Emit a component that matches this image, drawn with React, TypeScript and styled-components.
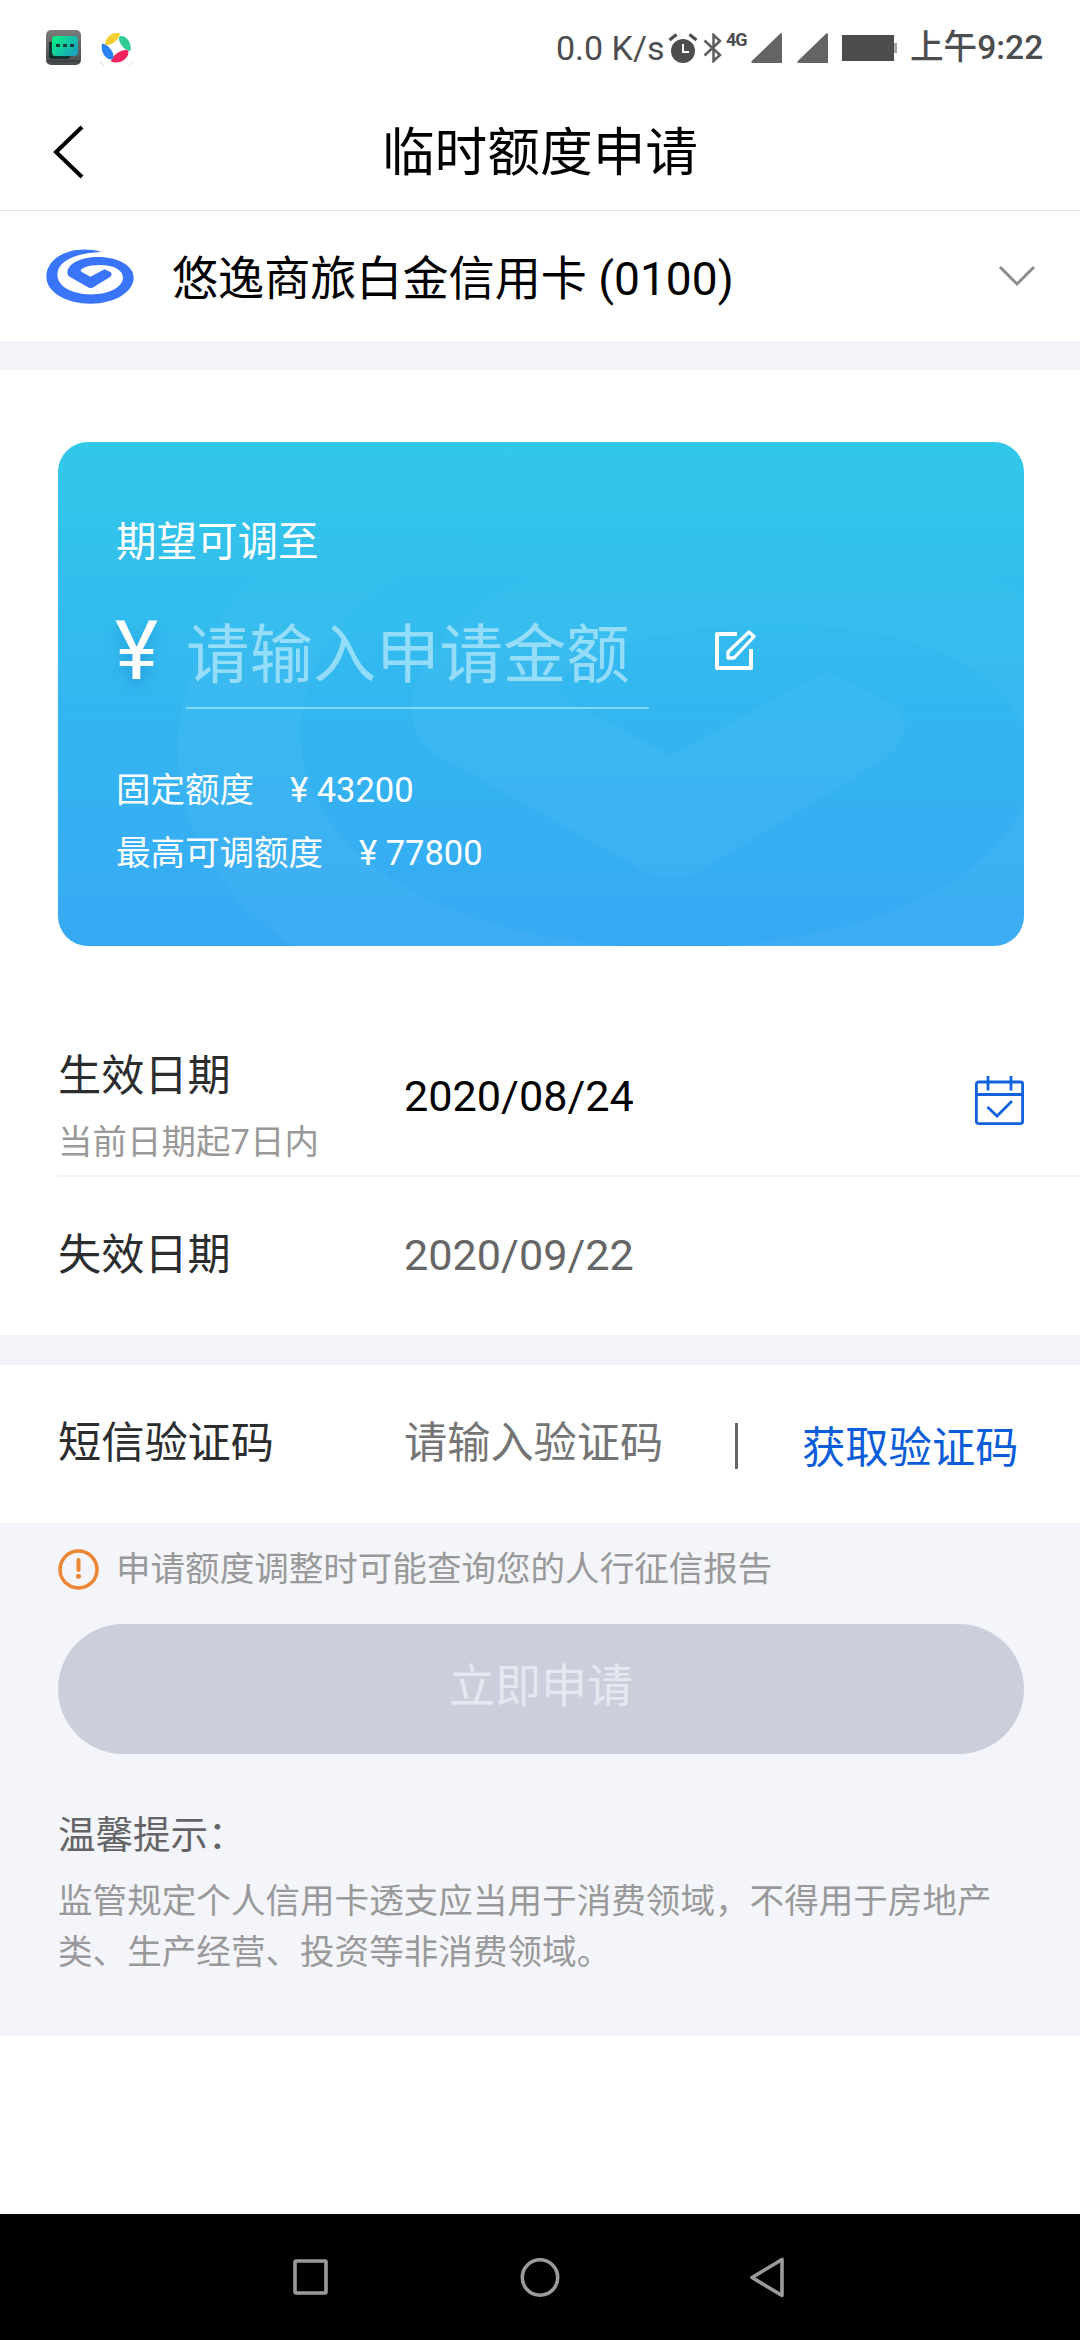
import React from "react";
import styled, { createGlobalStyle } from "styled-components";

const GlobalStyle = createGlobalStyle`
  * { box-sizing: border-box; }
  body {
    margin: 0;
    background: #fff;
    font-family: Roboto, "Noto Sans CJK SC", sans-serif;
  }
  svg { display: block; flex: none; }
`;

const Screen = styled.div`
  width: 1080px;
  height: 2340px;
  display: flex;
  flex-direction: column;
  background: #fff;
  overflow: hidden;
  white-space: nowrap;
`;

const StatusBar = styled.header`
  height: 96px;
  flex: none;
  display: flex;
  justify-content: space-between;
  padding: 0 37px 0 46px;
  color: #4c4d4f;
`;

const StatusApps = styled.div`
  display: flex;
  gap: 18px;
  padding-top: 30px;
`;

const StatusInfo = styled.div`
  display: flex;
  height: 96px;
  align-items: center;
`;

const Speed = styled.span`
  width: 113px;
  padding-left: 1px;
  font-size: 34px;
  line-height: 96px;
`;

const NetworkType = styled.span`
  width: 28px;
  padding-left: 3px;
  align-self: flex-start;
  margin-top: 26px;
  font-size: 18px;
  font-weight: 700;
  line-height: 28px;
  letter-spacing: -1.2px;
`;

const Clock = styled.span`
  width: 133px;
  margin-left: 13px;
  font-size: 33.6px;
  line-height: 96px;
  font-weight: 500;
`;

const TitleBar = styled.div`
  height: 115px;
  flex: none;
  display: grid;
  grid-template-columns: 120px 1fr 120px;
  border-bottom: 1px solid #e2e2e2;
`;

const BackButton = styled.div`
  padding: 28px 0 0 52px;
`;

const Title = styled.h1`
  margin: 0;
  text-align: center;
  font-size: 52.7px;
  font-weight: 400;
  line-height: 114px;
  color: #000;
`;

const CardSelect = styled.div`
  height: 130px;
  flex: none;
  display: flex;
  align-items: center;
  padding: 0 44px 0 46px;
`;

const CardName = styled.span`
  flex: 1;
  margin-left: 38px;
  font-size: 46.1px;
  line-height: 60px;
  padding-top: 6px;
  color: #000;
`;

const Band = styled.div`
  height: ${(p: { $h: number }) => p.$h}px;
  flex: none;
  background: #f2f4f9;
`;

const QuotaSection = styled.section`
  padding: 72px 56px 0 58px;
  height: 648px;
  flex: none;
`;

const QuotaCard = styled.div`
  position: relative;
  height: 504px;
  padding: 70px 58px 0;
  border-radius: 30px;
  overflow: hidden;
  color: #fff;
  background: linear-gradient(180deg, #32c8e8 0%, #33b7f0 50%, #37a9f4 100%);
`;

const Watermark = styled.svg`
  position: absolute;
  left: 120px;
  top: 0;
`;

const QuotaBody = styled.div`
  position: relative;
  display: flex;
  flex-direction: column;
`;

const QuotaLabel = styled.div`
  font-size: 40.5px;
  line-height: 60px;
`;

const AmountRow = styled.div`
  display: flex;
  height: 137px;
`;

const Currency = styled.span`
  width: 70px;
  margin-left: -1px;
  font-size: 82px;
  font-weight: 400;
  line-height: 100px;
  margin-top: 29px;
  text-shadow: 0 8px 12px rgba(20, 110, 190, 0.35);
`;

const AmountField = styled.div`
  width: 463px;
  height: 137px;
  margin-left: 1px;
  border-bottom: 2px solid #7edaf8;
  font-size: 63.4px;
  line-height: 167px;
  color: rgba(205, 242, 255, 0.62);
`;

const EditButton = styled.div`
  margin: 56px 0 0 63px;
`;

const QuotaLines = styled.div`
  margin-top: 50px;
`;

const QuotaLine = styled.div`
  display: flex;
  gap: 36px;
  font-size: 34.5px;
  line-height: 63px;
`;

const Row = styled.div`
  height: ${(p: { $h: number }) => p.$h}px;
  flex: none;
  display: flex;
  align-items: center;
  margin-left: 58px;
  padding-right: 56px;
  border-bottom: ${(p: { $h: number; $line?: boolean }) => (p.$line ? "2px solid #f5f5f6" : "none")};
`;

const LabelCell = styled.div`
  width: 346px;
  flex: none;
`;

const StackedLabel = styled(LabelCell)`
  align-self: flex-end;
`;

const Label = styled.div`
  font-size: 43.2px;
  line-height: 66px;
  color: #2c2d2f;
`;

const SubLabel = styled.div`
  font-size: 34.5px;
  line-height: 65px;
  color: #999;
`;

const Value = styled.div`
  flex: 1;
  font-size: 43.2px;
  line-height: 66px;
  color: ${(p: { $c: string }) => p.$c};
`;

const CalendarButton = styled.div`
  padding-top: 8px;
`;

const Separator = styled.div`
  width: 3px;
  height: 46px;
  margin-top: 3px;
  background: #666;
`;

const CodeButton = styled.div`
  width: 286px;
  padding: 9px 0 0 64px;
  font-size: 43.3px;
  line-height: 66px;
  color: #0a5cd8;
`;

const CodeValue = styled(Value)`
  flex: none;
  width: 331px;
`;

const Footer = styled.section`
  height: 513px;
  flex: none;
  padding: 26px 56px 0 58px;
  background: #f3f5fa;
`;

const Notice = styled.div`
  height: 41px;
  display: flex;
  align-items: center;
  gap: 17px;
  font-size: 34.55px;
  line-height: 41px;
  color: #999;
`;

const ApplyButton = styled.div`
  height: 130px;
  margin-top: 34px;
  border-radius: 65px;
  background: #cccfdb;
  text-align: center;
  font-size: 46px;
  line-height: 125px;
  color: #e5e8f1;
`;

const TipsTitle = styled.div`
  margin-top: 55px;
  font-size: 37.5px;
  line-height: 53px;
  color: #646466;
`;

const TipsText = styled.p`
  margin: 14px 0 0;
  font-size: 34.6px;
  line-height: 51px;
  color: #999;
`;

const NavBar = styled.nav`
  height: 126px;
  flex: none;
  margin-top: auto;
  display: flex;
  align-items: center;
  justify-content: center;
  gap: 187px;
  background: #000;
`;

const SWIRL =
  "M195 38 C160 28 125 29 95 38 C55 50 30 80 30 112 C30 160 90 194 162 194 C235 194 291 158 291 115 C291 80 245 53 185 53 C130 53 93 75 93 100 C93 108 97 112 105 116 L152 143 C159 148 166 148 173 143 L218 115 C226 109 228 103 220 98 L204 90 L162 113 L140 101 C132 97 130 94 136 89 C150 80 170 77 192 77 C232 77 259 93 259 115 C259 145 215 166 163 166 C105 166 63 141 63 107 C63 70 105 42 195 38 Z";

const MessageApp = () => (
  <svg width="35" height="35" viewBox="0 0 35 35">
    <defs>
      <linearGradient id="msgBg" x1="0" y1="0" x2="0" y2="1">
        <stop offset="0" stopColor="#7b7c7c" />
        <stop offset="1" stopColor="#474b4b" />
      </linearGradient>
      <linearGradient id="msgFg" x1="0" y1="0" x2="1" y2="0.6">
        <stop offset="0.2" stopColor="#0be58b" />
        <stop offset="1" stopColor="#1aa5bd" />
      </linearGradient>
    </defs>
    <rect width="35" height="35" rx="5" fill="url(#msgBg)" />
    <path d="M3 12h4v14h18l-3 3H6a3 3 0 0 1-3-3z" fill="#143230" />
    <rect x="6" y="6" width="26" height="20" rx="4" fill="url(#msgFg)" />
    <path d="M10 14h4v3h-4zM17 14h4v3h-4zM24 14h4v3h-4z" fill="#123f3c" />
    <path d="M1 31h33" stroke="#2f3333" strokeWidth="1" />
  </svg>
);

const PinwheelApp = () => (
  <svg width="35" height="35" viewBox="0 0 35 35">
    <path d="M1 31q1 3.500 4 3.500M34 31q-1 3.500-4 3.500" stroke="#dcdcdc" fill="none" />
    <path d="M6 14C7 6 14 1.500 21 3.500C21 8 15 14 10 14.800C7.500 15.300 6 15 6 14Z" fill="#f5cf2f" />
    <path d="M22 6C28 6 33 13 31.500 21C26 21 20.500 14 20 9.500C19.800 7 20.500 6 22 6Z" fill="#35cc93" />
    <path d="M29.500 22C29 30 20 34.500 12 31.500C13 26 20 20.500 26 20C28.500 20 29.500 20.500 29.500 22Z" fill="#f0255f" />
    <path d="M11.500 29.500C5 28 1.500 21 3 13.500C8 14 14 20 14.500 26C14.500 28.500 13.500 29.800 11.500 29.500Z" fill="#2a83f2" />
  </svg>
);

const AlarmIcon = () => (
  <svg width="30" height="30" viewBox="0 0 30 30">
    <circle cx="15" cy="18" r="12" fill="#4c4d4f" />
    <path d="M1.500 7L8.500 1.500M28.500 7L21.500 1.500" stroke="#4c4d4f" strokeWidth="3.200" />
    <path d="M15 11v8h6" stroke="#fff" strokeWidth="2" fill="none" />
  </svg>
);

const BluetoothIcon = () => (
  <svg width="20" height="30" viewBox="0 0 20 30">
    <path d="M1.500 7.500L17 22L10.500 28V2L17 8L1.500 22.500" stroke="#5d5e60" strokeWidth="2.500" fill="none" />
  </svg>
);

const SignalIcon = () => (
  <svg width="31" height="30" viewBox="0 0 31 30">
    <path d="M31 1.500V30H1.500Q-.5 30 .8 28L29 .7Q31-.5 31 1.500Z" fill="#636466" />
  </svg>
);

const BatteryIcon = () => (
  <svg width="55" height="26" viewBox="0 0 55 26">
    <rect width="52" height="26" fill="#4b4c4d" />
    <rect x="52" y="8" width="3" height="10" fill="#a5a5a5" />
  </svg>
);

const Gap = styled.span`
  width: ${(p: { $w: number }) => p.$w}px;
`;

export default function App() {
  return (
    <>
      <GlobalStyle />
      <Screen>
        <StatusBar>
          <StatusApps>
            <MessageApp />
            <PinwheelApp />
          </StatusApps>
          <StatusInfo>
            <Speed>0.0 K/s</Speed>
            <AlarmIcon />
            <Gap $w={5} />
            <BluetoothIcon />
            <NetworkType>4G</NetworkType>
            <SignalIcon />
            <Gap $w={15} />
            <SignalIcon />
            <Gap $w={14} />
            <BatteryIcon />
            <Clock>上午9:22</Clock>
          </StatusInfo>
        </StatusBar>

        <TitleBar>
          <BackButton>
            <svg width="34" height="56" viewBox="0 0 34 56">
              <path d="M30 3L4 28L30 53" stroke="#000" strokeWidth="4" fill="none" />
            </svg>
          </BackButton>
          <Title>临时额度申请</Title>
        </TitleBar>

        <CardSelect>
          <svg width="88" height="55" viewBox="29 29 263 166" preserveAspectRatio="none">
            <path d={SWIRL} fill="#3a74f8" />
          </svg>
          <CardName>悠逸商旅白金信用卡 (0100)</CardName>
          <svg width="38" height="22" viewBox="0 0 38 22">
            <path d="M2 2L19 19L36 2" stroke="#8c8c8e" strokeWidth="3" fill="none" />
          </svg>
        </CardSelect>
        <Band $h={29} />

        <QuotaSection>
          <QuotaCard>
            <Watermark width="846" height="504" viewBox="0 0 846 504">
              <defs>
                <linearGradient id="fade" x1="0" y1="0" x2="0" y2="1">
                  <stop offset="0.1" stopColor="#fff" stopOpacity="0" />
                  <stop offset="0.4" stopColor="#fff" stopOpacity="0.035" />
                </linearGradient>
              </defs>
              <path d={SWIRL} transform="translate(-112.300 -96.600) scale(3.730 3.630)" fill="url(#fade)" />
            </Watermark>
            <QuotaBody>
              <QuotaLabel>期望可调至</QuotaLabel>
              <AmountRow>
                <Currency>¥</Currency>
                <AmountField>请输入申请金额</AmountField>
                <EditButton>
                  <svg width="44" height="44" viewBox="0 0 44 44">
                    <path d="M25 6H5V40H39V21" stroke="#fff" strokeWidth="4" fill="none" strokeLinejoin="round" />
                    <path d="M16 30V24L37 4L42 8.500L22 30Z" stroke="#fff" strokeWidth="3.300" fill="none" strokeLinejoin="round" />
                  </svg>
                </EditButton>
              </AmountRow>
              <QuotaLines>
                <QuotaLine>
                  <span>固定额度</span>
                  <span>¥ 43200</span>
                </QuotaLine>
                <QuotaLine>
                  <span>最高可调额度</span>
                  <span>¥ 77800</span>
                </QuotaLine>
              </QuotaLines>
            </QuotaBody>
          </QuotaCard>
        </QuotaSection>

        <Row $h={159} $line>
          <StackedLabel>
            <Label>生效日期</Label>
            <SubLabel>当前日期起7日内</SubLabel>
          </StackedLabel>
          <Value $c="#000">2020/08/24</Value>
          <CalendarButton>
            <svg width="49" height="49" viewBox="0 0 49 49">
              <g stroke="#1262dc" fill="none" strokeWidth="2.800">
                <rect x="1.400" y="6" width="46.200" height="41.600" rx="2" />
                <path d="M1 18.500H48M13 0V14.500M36 0V14.500" />
                <path d="M12.500 31L22 40L37 25" />
              </g>
            </svg>
          </CalendarButton>
        </Row>
        <Row $h={158}>
          <LabelCell>
            <Label>失效日期</Label>
          </LabelCell>
          <Value $c="#666">2020/09/22</Value>
        </Row>
        <Band $h={30} />

        <Row $h={158}>
          <LabelCell>
            <Label>短信验证码</Label>
          </LabelCell>
          <CodeValue $c="#757575">请输入验证码</CodeValue>
          <Separator />
          <CodeButton>获取验证码</CodeButton>
        </Row>

        <Footer>
          <Notice>
            <svg width="41" height="41" viewBox="0 0 41 41">
              <circle cx="20.500" cy="20.500" r="18.500" stroke="#ee8535" strokeWidth="3.500" fill="none" />
              <path d="M20.500 11V21" stroke="#ee8535" strokeWidth="4" strokeLinecap="round" />
              <circle cx="20.500" cy="27.300" r="2.500" fill="#ee8535" />
            </svg>
            <span>申请额度调整时可能查询您的人行征信报告</span>
          </Notice>
          <ApplyButton>立即申请</ApplyButton>
          <TipsTitle>温馨提示：</TipsTitle>
          <TipsText>
            监管规定个人信用卡透支应当用于消费领域，不得用于房地产
            <br />
            类、生产经营、投资等非消费领域。
          </TipsText>
        </Footer>

        <NavBar>
          <svg width="42" height="42" viewBox="0 0 42 42">
            <rect x="5" y="5" width="31" height="32" rx="1" stroke="#9b9b9b" strokeWidth="3.600" fill="none" />
          </svg>
          <svg width="42" height="42" viewBox="0 0 42 42">
            <circle cx="21" cy="21.500" r="17.700" stroke="#9b9b9b" strokeWidth="3.600" fill="none" />
          </svg>
          <svg width="42" height="42" viewBox="0 0 42 42">
            <path d="M34 3.500V39.500L4 21.500Z" stroke="#9b9b9b" strokeWidth="3.600" fill="none" strokeLinejoin="round" />
          </svg>
        </NavBar>
      </Screen>
    </>
  );
}
